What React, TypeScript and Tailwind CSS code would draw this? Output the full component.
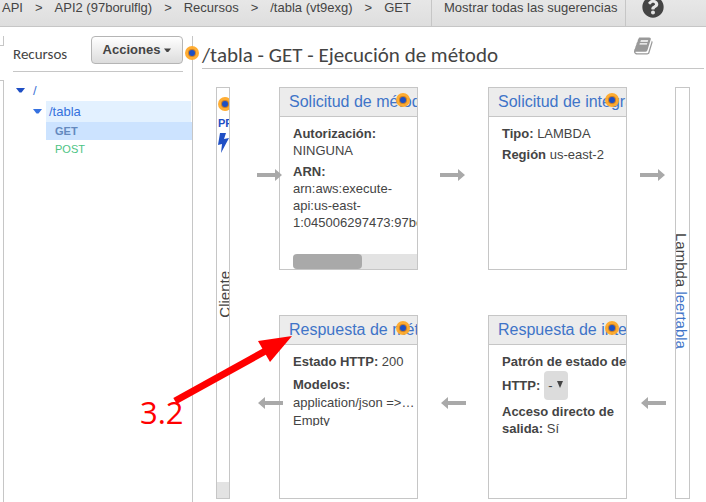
import React from 'react';
import { FaQuestionCircle } from 'react-icons/fa';

function Hint({ className = '' }: { className?: string }) {
  return (
    <span
      className={`absolute flex size-[14px] items-center justify-center rounded-full bg-[#ffa928]/95 ${className}`}
    >
      <span className="flex size-2 items-center justify-center rounded-full bg-[#c77d2b]">
        <span className="size-[6px] rounded-full bg-[#1c4fc4]" />
      </span>
    </span>
  );
}

function Arrow({ back = false, className = '' }: { back?: boolean; className?: string }) {
  return (
    <div className={`z-10 flex items-center pb-2 ${className}`}>
      <svg width="25" height="12" viewBox="0 0 25 12" fill="#a9a9a9" className="shrink-0">
        {back ? <path d="M25 4H7V0L0 6l7 6V8h18z" /> : <path d="M0 4h18V0l7 6-7 6V8H0z" />}
      </svg>
    </div>
  );
}

function Card({ title, className = '', children }: { title: string; className?: string; children: React.ReactNode }) {
  return (
    <section className={`relative flex min-w-0 flex-col overflow-hidden border border-[#c6c6c6] ${className}`}>
      <h2 className="border-b border-[#c6c6c6] bg-[#ececec] pl-[9px] text-[16px] leading-7 whitespace-nowrap">
        <a href="#" className="text-[#3f74c8]">{title}</a>
      </h2>
      <Hint className="top-[5px] right-[7px]" />
      {children}
    </section>
  );
}

function Caret({ className }: { className: string }) {
  return (
    <svg width="9" height="5" viewBox="0 0 9 5" className={className}>
      <path d="M0 0h9L5.500 4.500h-2z" fill="currentColor" />
    </svg>
  );
}

const crumbs = ['API', 'API2 (97borulflg)', 'Recursos', '/tabla (vt9exg)', 'GET'];

export default function App() {
  return (
    <div className="relative flex min-h-screen flex-col overflow-hidden bg-white font-['Liberation_Sans',Arial,sans-serif] text-[13px] text-[#444]">
      <header className="flex h-[27px] border-b border-[#c6c6c6] bg-linear-to-b from-[#e7e7e7] to-[#dedede] leading-4 whitespace-nowrap">
        <nav className="flex w-[431px] gap-3 pl-0.5" aria-label="Ruta">
          {crumbs.map((c, i) => (
            <React.Fragment key={c}>
              {i > 0 && <span>&gt;</span>}
              <a href="#">{c}</a>
            </React.Fragment>
          ))}
        </nav>
        <button className="flex border-x border-[#c6c6c6] pr-2 pl-3">Mostrar todas las sugerencias</button>
        <button aria-label="Ayuda" className="-mt-1 ml-4 flex">
          <FaQuestionCircle size={22} />
        </button>
      </header>

      <div className="flex flex-1 pt-[9px]">
        <div className="flex w-1 shrink-0 flex-col">
          <div className="h-[10px] border-r border-b border-[#c6c6c6]" />
          <div className="mt-[34px] flex-1 border-t border-r border-[#c6c6c6]" />
        </div>

        <aside className="w-[189px] shrink-0 border-r border-[#c6c6c6] pl-[9px]">
          <div className="mr-[9px] flex h-9 items-start justify-between border-b border-[#c6c6c6]">
            <h2 className="font-['Carlito','Lato',sans-serif] text-[15px] leading-9">Recursos</h2>
            <button className="flex h-7 w-[92px] items-center justify-center gap-1 rounded-[4px] border border-[#b5b5b5] bg-linear-to-b from-white to-[#dcdcdc] font-bold">
              Acciones
              <Caret className="w-[7px]" />
            </button>
          </div>
          <ul className="pt-[8px]">
            <li>
              <div className="flex h-[21px] items-center pl-[3px]">
                <Caret className="mr-2 text-[#1f4fc4]" />
                <a href="#" className="text-[#3d74d6]">/</a>
              </div>
              <ul>
                <li>
                  <div className="flex h-[21px] items-center pl-5">
                    <Caret className="mr-1 text-[#3571e0]" />
                    <a href="#" className="mr-px flex-1 bg-[#e3f1ff] pl-[3px] leading-[21px] text-[#3571dd]">/tabla</a>
                  </div>
                  <ul className="ml-[33px] text-[11px] leading-[18px]">
                    <li className="bg-[#cce3ff] pl-[9px]">
                      <a href="#" className="font-bold text-[#6489be]">GET</a>
                    </li>
                    <li className="pl-[9px]">
                      <a href="#" className="text-[#4cc484]">POST</a>
                    </li>
                  </ul>
                </li>
              </ul>
            </li>
          </ul>
        </aside>

        <main className="relative min-w-0 flex-1 pr-[2px] pl-[9px]">
          <Hint className="top-[10px] -left-[8px]" />
          <div className="flex h-[33px] items-start border-b border-[#c6c6c6]">
            <h1 className="flex-1 pt-1 font-['Carlito','Lato',sans-serif] text-[21px] leading-[30px] whitespace-nowrap">/tabla - GET - Ejecución de método</h1>
            <a href="#" aria-label="Documentación" className="mr-[50px] text-[#999]">
              <svg width="20" height="20" viewBox="0 0 1792 1792" fill="currentColor">
                <path d="M1639 478q40 57 18 129l-275 906q-19 64-76.500 107.500t-122.500 43.500h-923q-77 0-148.500-53.500t-99.500-131.500q-24-67-2-127 0-4 3-27t4-37q1-8-3-21.500t-3-19.500q2-11 8-21t16.500-23.500 16.500-23.500q23-38 45-91.500t30-91.500q3-10 .5-30t-.5-28q3-11 17-28t17-23q21-36 42-92t25-90q1-9-2.500-32t.5-28q4-13 22-30.500t22-22.500q19-26 42.500-84.500t27.500-96.500q1-8-3-25.500t-2-26.500q2-8 9-18t18-23 17-21q8-12 16.500-30.500t15-35 16-36 19.500-32 26.500-23.500 36-11.500 47.500 5.500l-1 3q38-9 51-9h761q74 0 114 56t18 130l-274 906q-36 119-71.500 153.500t-128.500 34.500h-869q-27 0-38 15-11 16-1 43 24 70 144 70h923q29 0 56-15.500t35-41.500l300-987q7-22 5-57 38 15 59 43zm-1064 2q-4 13 2 22.500t20 9.500h608q13 0 25.500-9.500t16.500-22.500l21-64q4-13-2-22.500t-20-9.500h-608q-13 0-25.500 9.500t-16.500 22.500zm-83 256q-4 13 2 22.500t20 9.500h608q13 0 25.500-9.500t16.500-22.500l21-64q4-13-2-22.500t-20-9.500h-608q-13 0-25.500 9.500t-16.500 22.500z" />
              </svg>
            </a>
          </div>

          <div className="mx-[14px] mt-[18px] grid grid-cols-[14px_49px_1fr_70px_1fr_48px_15px] grid-rows-[183px_184px] gap-y-[45px]">
            <div className="relative row-span-2 flex flex-col overflow-hidden border border-[#c6c6c6]">
              <Hint className="top-[9px] left-px" />
              <b className="mt-[29px] pl-px text-[11px] leading-3 text-[#1f4fc4]">PRUEBA</b>
              <svg width="12" height="20" viewBox="0 0 12 20" fill="#1f4fc4" className="mt-1 shrink-0">
                <path d="M3 0h6L7 6l5-1L4 20l1-9-4 1z" />
              </svg>
              <span className="mt-[118px] rotate-180 text-[15px] leading-4 whitespace-nowrap [writing-mode:vertical-rl]">Cliente</span>
              <div className="mt-auto h-4 shrink-0 bg-[#e3e3e3]" />
            </div>
            <Arrow className="pl-[27px]" />
            <Card title="Solicitud de método">
              <div className="flex-1 overflow-hidden pt-2 pl-[13px] leading-[17px]">
                <p><b>Autorización:</b><br />NINGUNA</p>
                <p className="mt-1 whitespace-nowrap"><b>ARN:</b><br />arn:aws:execute-<br />api:us-east-<br />1:045006297473:97borulflg</p>
              </div>
              <div className="ml-[13px] h-[15px] rounded-l-[4px] bg-[#e3e3e3]">
                <div className="h-full w-[69px] rounded-[4px] bg-[#a9a9a9]" />
              </div>
            </Card>
            <Arrow className="pl-[22px]" />
            <Card title="Solicitud de integración">
              <div className="space-y-1 pt-2 pl-[13px] leading-[17px]">
                <p><b>Tipo:</b> LAMBDA</p>
                <p><b>Región</b> us-east-2</p>
              </div>
            </Card>
            <Arrow className="pl-[13px]" />
            <div className="row-span-2 flex overflow-hidden border border-[#c6c6c6] pt-[145px]">
              <p className="-ml-[3px] text-[15px] leading-4 whitespace-nowrap [writing-mode:vertical-rl]">
                Lambda <a href="#" className="text-[#3f74c8]">leertabla</a>
              </p>
            </div>
            <Arrow back className="pl-[28px]" />
            <Card title="Respuesta de método">
              <div className="h-[81px] overflow-hidden pt-2 pl-[13px] leading-[18px]">
                <p><b>Estado HTTP:</b> 200</p>
                <p className="mt-[5px] whitespace-nowrap"><b>Modelos:</b><br />application/json =&gt;…<br />Empty</p>
              </div>
            </Card>
            <Arrow back className="pl-[23px]" />
            <Card title="Respuesta de integración">
              <div className="pt-2 pl-[13px] leading-[17px] whitespace-nowrap">
                <p className="font-bold">Patrón de estado de</p>
                <div className="mt-px flex items-center gap-1">
                  <label htmlFor="patron" className="font-bold">HTTP:</label>
                  <span className="relative">
                    <select id="patron" className="block h-[29px] w-6 appearance-none rounded-[4px] bg-[#dcdcdc] pl-1">
                      <option>-</option>
                    </select>
                    <svg width="6" height="7" viewBox="0 0 6 7" className="pointer-events-none absolute top-[10px] right-[5px]">
                      <path d="M0 0h6L3 7z" fill="#444" />
                    </svg>
                  </span>
                </div>
                <p className="mt-[3px]"><b>Acceso directo de<br />salida:</b> Sí</p>
              </div>
            </Card>
            <Arrow back className="pl-[14px]" />
          </div>
        </main>
      </div>

      <div className="pointer-events-none absolute top-[336px] left-[140px] z-20 h-[92px] w-[152px]">
        <span className="absolute top-[58px] left-0 font-['Open_Sans',sans-serif] text-[31px] leading-9 text-[#f00]">3.2</span>
        <svg width="152" height="92" viewBox="0 0 152 92" className="absolute top-0 left-0" fill="none">
          <path d="M35 65 129 13" stroke="#f00" strokeWidth="7" />
          <path d="M152 0 118 5l12 21z" fill="#f00" />
        </svg>
      </div>
    </div>
  );
}
